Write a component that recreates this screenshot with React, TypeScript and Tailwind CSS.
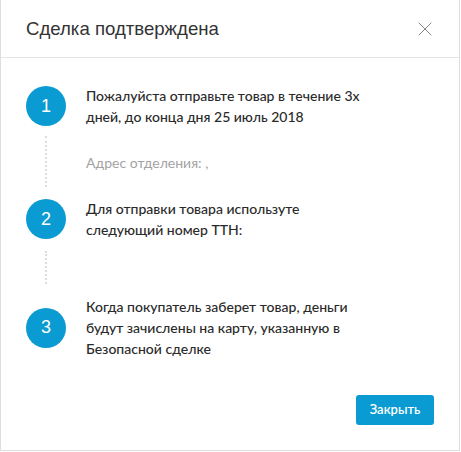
import { X } from 'lucide-react';

const steps = [
  {
    n: 1,
    text: 'Пожалуйста отправьте товар в течение 3х дней, до конца дня 25 июль 2018',
  },
  {
    n: 2,
    text: 'Для отправки товара используте следующий номер ТТН:',
  },
  {
    n: 3,
    text: 'Когда покупатель заберет товар, деньги будут зачислены на карту, указанную в Безопасной сделке',
  },
];

function StepRow({ n, text }: { n: number; text: string }) {
  return (
    <div className="flex items-center">
      <div className="w-10 h-10 shrink-0 rounded-full bg-[#0a9bd2] text-white flex items-center justify-center text-[18px] font-['Liberation_Sans',Arial,sans-serif]">
        {n}
      </div>
      <p className="ml-5 w-[280px] text-[14px] leading-[21px] font-medium text-[#2a2a2a] font-['Lato','Open_Sans',sans-serif]">
        {text}
      </p>
    </div>
  );
}

function Connector({ height, children }: { height: string; children?: React.ReactNode }) {
  return (
    <div className={`flex items-center ${height}`}>
      <div className="w-10 shrink-0 self-stretch flex">
        {children !== undefined ? (
          <div className="ml-[19px] mt-[9px] mb-[11px] border-l-2 border-dotted border-[#ddd]" />
        ) : (
          <div className="ml-[19px] mt-[11px] mb-[12px] border-l-2 border-dotted border-[#ddd]" />
        )}
      </div>
      {children}
    </div>
  );
}

export default function App() {
  return (
    <div className="w-[460px] h-[451px] bg-white border-l border-r border-b border-[#dedede] flex flex-col">
      <div className="h-[58px] shrink-0 px-[25px] flex items-center justify-between border-b border-[#e5e5e5]">
        <h2 className="text-[18.6px] text-[#333] font-['Liberation_Sans',Arial,sans-serif]">Сделка подтверждена</h2>
        <button className="text-[#888] -mr-[3px]">
          <X size={24} strokeWidth={1} />
        </button>
      </div>

      <div className="px-[25px] pt-[27px]">
        <StepRow {...steps[0]} />
        <Connector height="h-[71px]">
          <span className="ml-5 text-[14px] text-[#a3a3a3] font-['Lato','Open_Sans',sans-serif]">Адрес отделения: ,</span>
        </Connector>
        <StepRow {...steps[1]} />
        <Connector height="h-[56px]" />
        <StepRow {...steps[2]} />
      </div>

      <div className="mt-auto px-[25px] pb-[25px] flex justify-end">
        <button className="w-[78px] h-[30px] rounded-[3px] bg-[#0a9bd2] text-white text-[13px] font-semibold font-['Lato','Open_Sans',sans-serif]">
          Закрыть
        </button>
      </div>
    </div>
  );
}
